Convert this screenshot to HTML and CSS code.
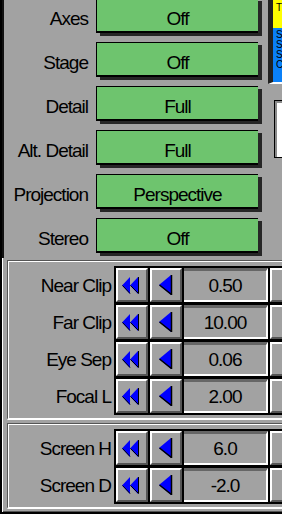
FILE: index.html
```html
<!DOCTYPE html>
<html lang="en">
  <head>
    <meta charset="utf-8">
    <link rel="stylesheet" href="styles.css">
    <title>View settings</title>
  </head>
  <body>
    <div class="win">
      <div class="top">
        <div class="opts">
          <div class="opt"><span class="lbl">Axes</span><span class="val">Off</span></div>
          <div class="opt"><span class="lbl">Stage</span><span class="val">Off</span></div>
          <div class="opt"><span class="lbl">Detail</span><span class="val">Full</span></div>
          <div class="opt"><span class="lbl">Alt. Detail</span><span class="val">Full</span></div>
          <div class="opt"><span class="lbl">Projection</span><span class="val">Perspective</span></div>
          <div class="opt"><span class="lbl">Stereo</span><span class="val">Off</span></div>
        </div>
        <div class="side">
          <div class="flag">
            <div class="flag-y">T</div>
            <div class="flag-b">S<br>S<br>S<br>C</div>
          </div>
          <div class="wbox"></div>
        </div>
      </div>

      <div class="bottom">
        <div class="panel">
          <div class="row">
            <span class="lbl2">Near Clip</span>
            <div class="ctl">
              <span class="btn"><svg class="dbl" width="17" height="17" viewBox="0 0 17 17"><path d="M0 8.5 L8 0 L8 17 Z M8 8.5 L16 0 L16 17 Z" fill="#0000ff"/><path d="M0.5 8.5 L8 16.5 M8.5 8.5 L16.5 16.5 L16.5 0" stroke="#000" fill="none"/></svg></span>
              <span class="btn"><svg width="14" height="20" viewBox="0 0 14 20"><path d="M0 10 L12 0 L12 20 Z" fill="#0000ff"/><path d="M0.5 10 L12.5 19.5 L12.5 0" stroke="#000" stroke-width="1.5" fill="none"/></svg></span>
              <span class="num">0.50</span>
              <span class="btn wide"></span>
            </div>
          </div>
          <div class="row">
            <span class="lbl2">Far Clip</span>
            <div class="ctl">
              <span class="btn"><svg class="dbl" width="17" height="17" viewBox="0 0 17 17"><path d="M0 8.5 L8 0 L8 17 Z M8 8.5 L16 0 L16 17 Z" fill="#0000ff"/><path d="M0.5 8.5 L8 16.5 M8.5 8.5 L16.5 16.5 L16.5 0" stroke="#000" fill="none"/></svg></span>
              <span class="btn"><svg width="14" height="20" viewBox="0 0 14 20"><path d="M0 10 L12 0 L12 20 Z" fill="#0000ff"/><path d="M0.5 10 L12.5 19.5 L12.5 0" stroke="#000" stroke-width="1.5" fill="none"/></svg></span>
              <span class="num">10.00</span>
              <span class="btn wide"></span>
            </div>
          </div>
          <div class="row">
            <span class="lbl2">Eye Sep</span>
            <div class="ctl">
              <span class="btn"><svg class="dbl" width="17" height="17" viewBox="0 0 17 17"><path d="M0 8.5 L8 0 L8 17 Z M8 8.5 L16 0 L16 17 Z" fill="#0000ff"/><path d="M0.5 8.5 L8 16.5 M8.5 8.5 L16.5 16.5 L16.5 0" stroke="#000" fill="none"/></svg></span>
              <span class="btn"><svg width="14" height="20" viewBox="0 0 14 20"><path d="M0 10 L12 0 L12 20 Z" fill="#0000ff"/><path d="M0.5 10 L12.5 19.5 L12.5 0" stroke="#000" stroke-width="1.5" fill="none"/></svg></span>
              <span class="num">0.06</span>
              <span class="btn wide"></span>
            </div>
          </div>
          <div class="row">
            <span class="lbl2">Focal L</span>
            <div class="ctl">
              <span class="btn"><svg class="dbl" width="17" height="17" viewBox="0 0 17 17"><path d="M0 8.5 L8 0 L8 17 Z M8 8.5 L16 0 L16 17 Z" fill="#0000ff"/><path d="M0.5 8.5 L8 16.5 M8.5 8.5 L16.5 16.5 L16.5 0" stroke="#000" fill="none"/></svg></span>
              <span class="btn"><svg width="14" height="20" viewBox="0 0 14 20"><path d="M0 10 L12 0 L12 20 Z" fill="#0000ff"/><path d="M0.5 10 L12.5 19.5 L12.5 0" stroke="#000" stroke-width="1.5" fill="none"/></svg></span>
              <span class="num">2.00</span>
              <span class="btn wide"></span>
            </div>
          </div>
        </div>

        <div class="panel second">
          <div class="row">
            <span class="lbl2">Screen H</span>
            <div class="ctl">
              <span class="btn"><svg class="dbl" width="17" height="17" viewBox="0 0 17 17"><path d="M0 8.5 L8 0 L8 17 Z M8 8.5 L16 0 L16 17 Z" fill="#0000ff"/><path d="M0.5 8.5 L8 16.5 M8.5 8.5 L16.5 16.5 L16.5 0" stroke="#000" fill="none"/></svg></span>
              <span class="btn"><svg width="14" height="20" viewBox="0 0 14 20"><path d="M0 10 L12 0 L12 20 Z" fill="#0000ff"/><path d="M0.5 10 L12.5 19.5 L12.5 0" stroke="#000" stroke-width="1.5" fill="none"/></svg></span>
              <span class="num">6.0</span>
              <span class="btn wide"></span>
            </div>
          </div>
          <div class="row">
            <span class="lbl2">Screen D</span>
            <div class="ctl">
              <span class="btn"><svg class="dbl" width="17" height="17" viewBox="0 0 17 17"><path d="M0 8.5 L8 0 L8 17 Z M8 8.5 L16 0 L16 17 Z" fill="#0000ff"/><path d="M0.5 8.5 L8 16.5 M8.5 8.5 L16.5 16.5 L16.5 0" stroke="#000" fill="none"/></svg></span>
              <span class="btn"><svg width="14" height="20" viewBox="0 0 14 20"><path d="M0 10 L12 0 L12 20 Z" fill="#0000ff"/><path d="M0.5 10 L12.5 19.5 L12.5 0" stroke="#000" stroke-width="1.5" fill="none"/></svg></span>
              <span class="num">-2.0</span>
              <span class="btn wide"></span>
            </div>
          </div>
        </div>
        <div class="foot"></div>
      </div>
    </div>
  </body>
</html>
```

FILE: styles.css
```css
body {
  margin: 0;
  background-color: #a2a2a2;
  font-family: "Liberation Sans", Arial, sans-serif;
  font-size: 19px;
  letter-spacing: -1px;
  color: #000;
  overflow: hidden;
}

.win {
  width: 282px;
  height: 514px;
  box-sizing: border-box;
  border-left: 2px solid #000;
  border-bottom: 2px solid #000;
  overflow: hidden;
}

/* toggles at the top */
.top {
  display: flex;
  height: 258px;
  border-left: 2px solid #111;
}

.opts {
  display: flex;
  flex-direction: column;
  gap: 9px;
  margin-top: -2px;
}

.opt {
  display: flex;
  gap: 8px;
  height: 35px;
}

.lbl {
  width: 84px;
  text-align: right;
  padding-top: 5px;
  line-height: 32px;
}

.val {
  width: 162px;
  height: 35px;
  box-sizing: border-box;
  border: 1px solid #000;
  border-bottom-width: 2px;
  border-right: 0;
  background-color: #6ec46e;
  box-shadow: 4px 3px 0 #262626;
  text-align: center;
  padding-top: 4px;
  line-height: 32px;
}

.side {
  margin-left: 10px;
  width: 14px;
}

.flag {
  height: 82px;
  border-left: 5px solid #222;
  border-bottom: 2px solid #fff;
  font-size: 10px;
  line-height: 10px;
  letter-spacing: 0;
  overflow: hidden;
}

.flag-y {
  height: 28px;
  background-color: #ffff00;
  padding: 3px 0 0 3px;
  box-sizing: border-box;
}

.flag-b {
  height: 54px;
  background-color: #0a80f8;
  padding: 2px 0 0 3px;
  box-sizing: border-box;
}

.wbox {
  margin: 16px 0 0 6px;
  height: 58px;
  box-sizing: border-box;
  border: 1px solid #000;
  border-right: 0;
  background-color: #fff;
  box-shadow: inset 2px 2px 0 #8a8a8a;
}

/* numeric steppers */
.bottom {
  border-left: 1px solid #fff;
  padding: 2px 0 0 4px;
}

.panel {
  border-top: 1px solid #555;
  border-left: 1px solid #555;
  border-bottom: 2px solid #fff;
  box-shadow: inset 1px 1px 0 #fff;
  padding: 5px 0 3px 1px;
}

.second {
  margin-top: 3px;
}

.row {
  display: flex;
  gap: 3px;
}

.lbl2 {
  width: 102px;
  flex-shrink: 0;
  text-align: right;
  padding-top: 3px;
  line-height: 34px;
}

.ctl {
  display: flex;
  gap: 2px;
  background-color: #000;
  padding: 2px 0 0 2px;
}

.row:last-child .ctl {
  padding-bottom: 2px;
}

.btn {
  width: 32px;
  height: 34px;
  box-sizing: border-box;
  border: 2px solid;
  border-color: #fff #555 #555 #fff;
  background-color: #a2a2a2;
  display: flex;
  align-items: center;
  justify-content: center;
}

.btn .dbl {
  margin-right: 4px;
}

.btn.wide {
  width: 12px;
  border-right: 0;
}

.num {
  width: 84px;
  height: 34px;
  box-sizing: border-box;
  border-top: 3px solid #666;
  border-right: 2px solid #fff;
  border-bottom: 2px solid #fff;
  background-color: #a2a2a2;
  text-align: center;
  line-height: 29px;
}

.foot {
  margin: 2px 0 0 -4px;
  height: 2px;
  background-color: #555;
}
```
